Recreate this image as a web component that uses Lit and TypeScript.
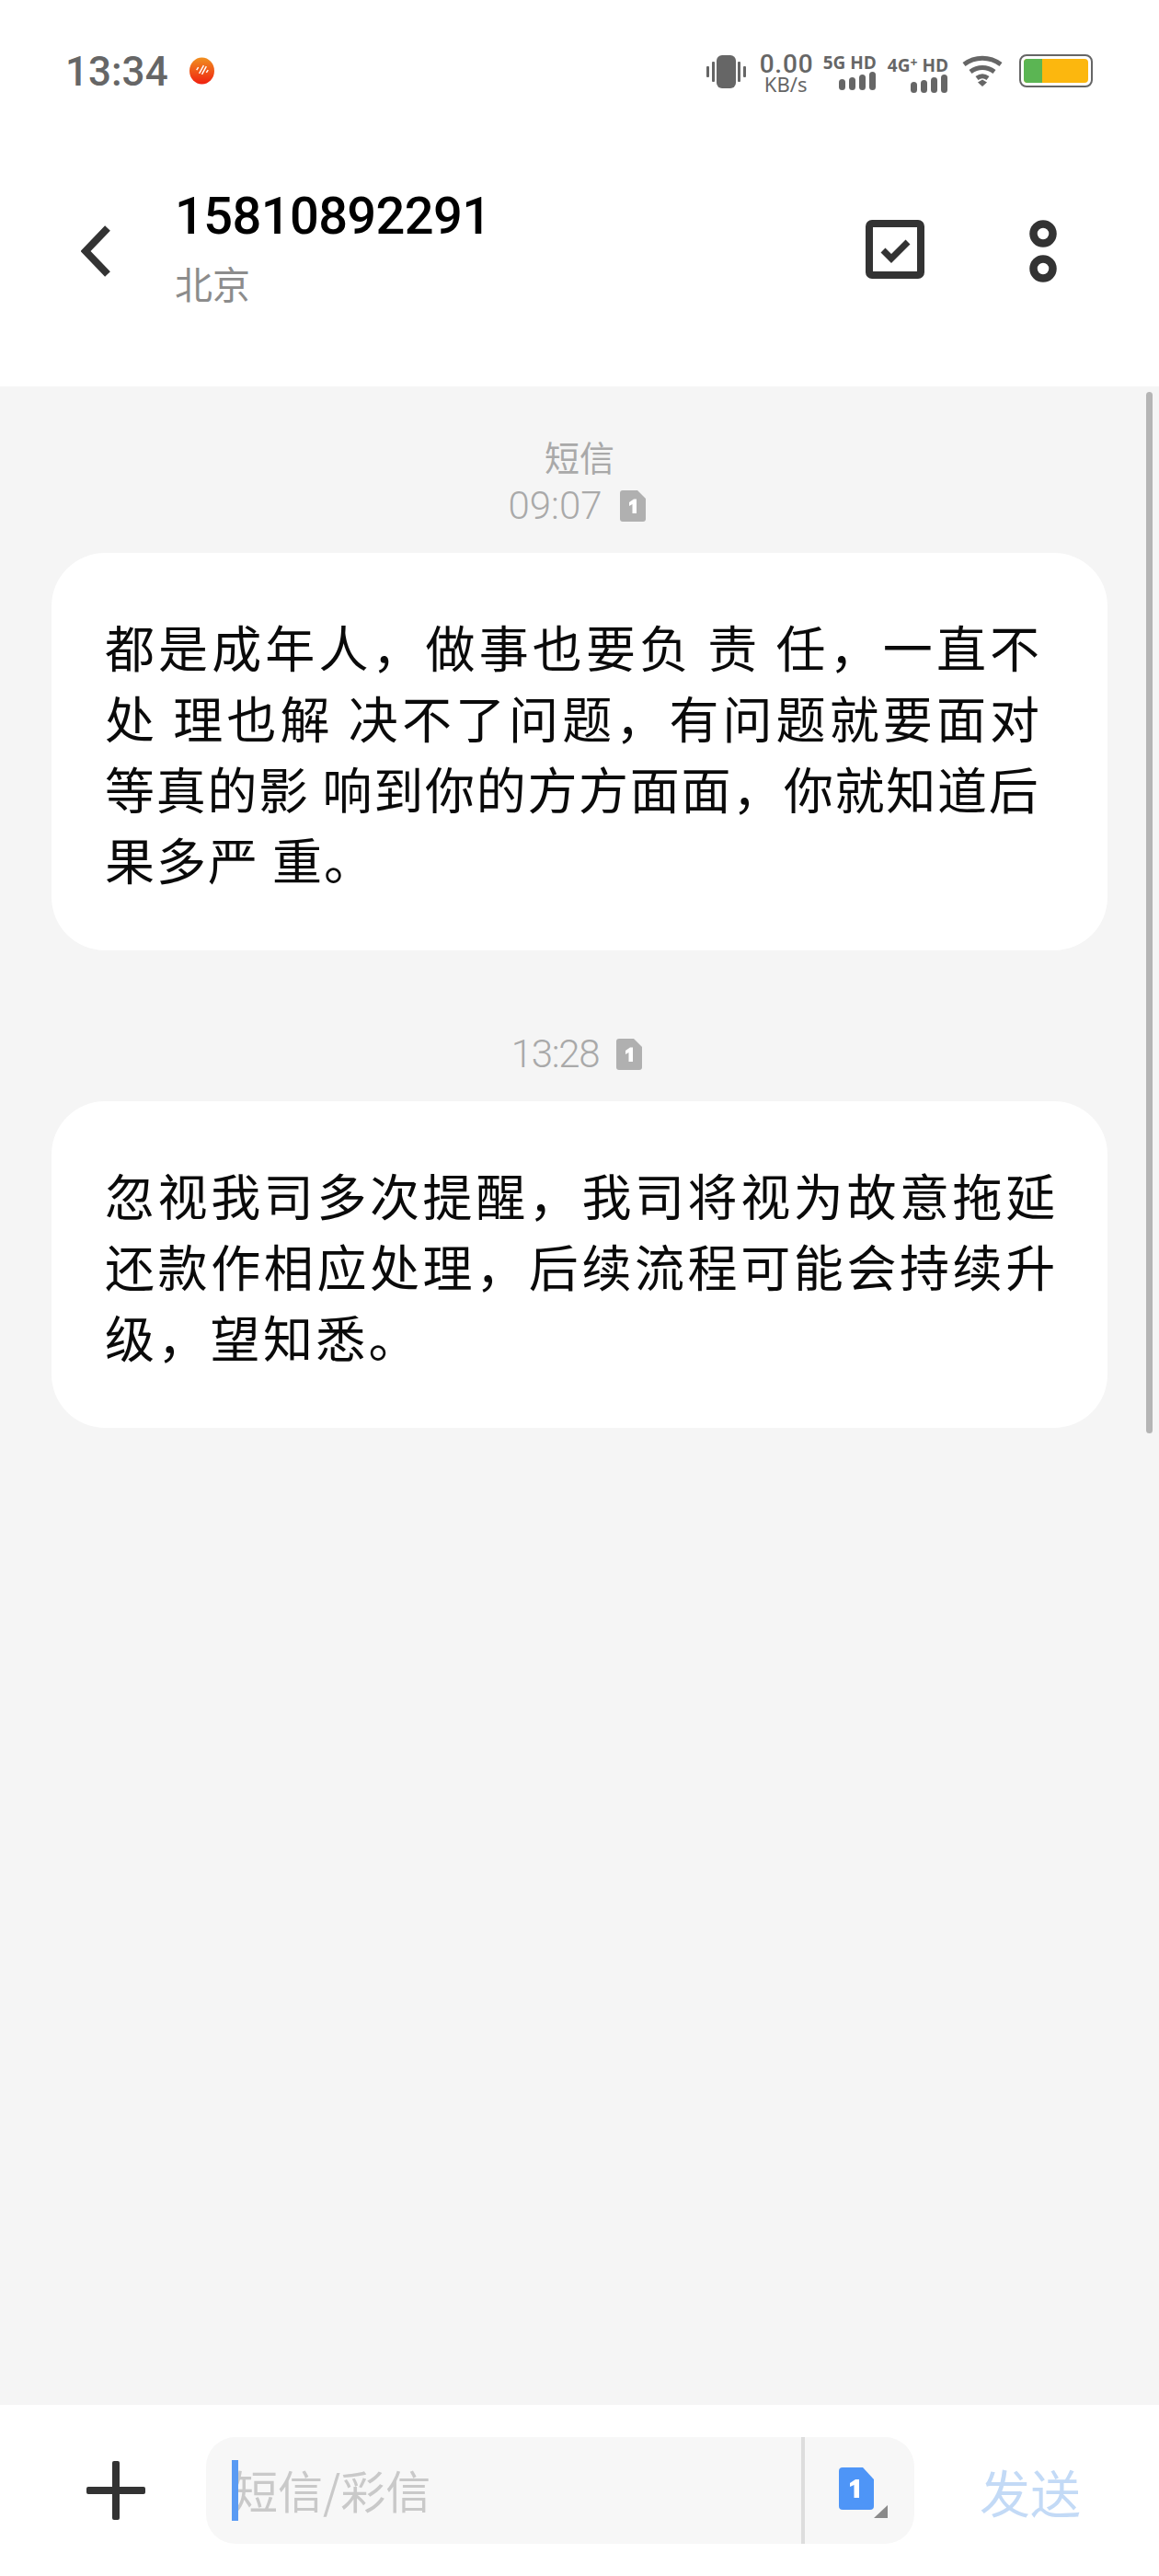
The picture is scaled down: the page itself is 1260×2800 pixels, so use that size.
import { LitElement, html, css, svg } from "lit";
import { customElement } from "lit/decorators.js";

// each line keeps its own tracking, the source text is unevenly spaced
const firstMsg = [
  { text: "都是成年人，做事也要负 责 任，一直不", track: 4.1 },
  { text: "处 理也解 决不了问题，有问题就要面对", track: 4.1 },
  { text: "等真的影 响到你的方方面面，你就知道后", track: 1.7 },
  { text: "果多严 重。", track: 2 },
];

const secondMsg = [
  { text: "忽视我司多次提醒，我司将视为故意拖延", track: 3.6 },
  { text: "还款作相应处理，后续流程可能会持续升", track: 3.6 },
  { text: "级，望知悉。", track: 3.3 },
];

const simIcon = (fill: string) => html`
  <svg class="sim" viewBox="0 0 28 34" width="28" height="34">
    <path d="M3 0H19L28 9V31a3 3 0 0 1-3 3H3a3 3 0 0 1-3-3V3a3 3 0 0 1 3-3Z" fill=${fill}></path>
    <path d="M10 13l5-3.500h3V25H13.500V15L10 17Z" fill="#fff"></path>
  </svg>
`;

const signalBars = svg`
  <rect x="0" y="8" width="7" height="12" rx="3.500"></rect>
  <rect x="11" y="6" width="7" height="14" rx="3.500"></rect>
  <rect x="22" y="3" width="7" height="17" rx="3.500"></rect>
  <rect x="33" y="0" width="7" height="20" rx="3.500"></rect>
`;

@customElement("app-root")
export class AppRoot extends LitElement {
  static styles = css`
    :host {
      display: block;
      width: 1260px;
      height: 2800px;
      font-family: Roboto, "Noto Sans CJK SC", sans-serif;
      background: #fff;
      overflow: hidden;
    }

    .page {
      display: flex;
      flex-direction: column;
      height: 2800px;
    }

    /* status bar */
    .status {
      height: 154px;
      display: flex;
      align-items: flex-start;
      padding: 52px 72px 0 71px;
      box-sizing: border-box;
      color: #666;
    }

    .time {
      font-size: 44px;
      font-weight: 500;
      line-height: 52px;
      margin-right: 23px;
    }

    .dot {
      margin-top: 10px;
    }

    .status-icons {
      margin-left: auto;
      display: flex;
      align-items: flex-start;
      margin-top: 7px;
    }

    .vibrate {
      margin: 1px 15px 0 0;
    }

    .speed {
      width: 57px;
      margin-right: 12px;
      text-align: center;
      line-height: 1;
    }

    .speed b {
      display: block;
      font-weight: 500;
      font-size: 28px;
      letter-spacing: 0.8px;
      line-height: 22px;
    }

    .speed span {
      display: block;
      font-size: 22px;
      line-height: 18px;
      margin-top: 1px;
      font-family: "Noto Sans", sans-serif;
    }

    .net {
      display: flex;
      flex-direction: column;
      align-items: flex-end;
      margin-right: 12px;
    }

    .net span {
      font-family: "Open Sans", sans-serif;
      font-size: 19px;
      font-weight: 700;
      line-height: 18px;
      white-space: nowrap;
    }

    .net em {
      font-style: normal;
      font-size: 14px;
      vertical-align: 5px;
    }

    .net svg {
      margin: 1px 1px 0 0;
      fill: #666;
    }

    .wifi {
      margin: 1px 18px 0 3px;
    }

    /* header */
    .head {
      height: 266px;
      box-sizing: border-box;
      display: flex;
      align-items: flex-start;
    }

    .back {
      margin: 91px 0 0 88px;
    }

    .who {
      margin: 49px 0 0 70px;
    }

    .num {
      font-size: 56px;
      font-weight: 500;
      letter-spacing: -0.6px;
      line-height: 64px;
      color: #000;
    }

    .place {
      font-family: "Noto Sans CJK SC", sans-serif;
      font-size: 41px;
      line-height: 58px;
      color: #8c8c8c;
      margin-top: 11px;
    }

    .tools {
      margin-left: auto;
      display: flex;
      align-items: flex-start;
      padding: 85px 111px 0 0;
      gap: 114px;
    }

    /* messages */
    .list {
      flex: 1;
      background: #f5f5f5;
      padding: 0 56px;
      position: relative;
    }

    .thumb {
      position: absolute;
      top: 6px;
      right: 7px;
      width: 7px;
      height: 1132px;
      border-radius: 4px;
      background: #b5b5b5;
    }

    .stamp {
      display: flex;
      flex-direction: column;
      align-items: center;
      color: #a9a9a9;
    }

    .stamp .label {
      font-family: "Noto Sans CJK SC", sans-serif;
      font-size: 38px;
      line-height: 50px;
    }

    .stamp .when {
      display: flex;
      align-items: center;
      gap: 19px;
      padding-right: 6px;
      font-size: 42px;
      font-weight: 300;
      line-height: 50px;
    }

    .sim {
      display: block;
    }

    .stamp-a {
      padding-top: 51px;
      gap: 4px;
    }

    .stamp-b {
      padding-top: 88px;
    }

    .stamp-b .when {
      letter-spacing: -1.300px;
    }

    .bubble {
      background: #fff;
      border-radius: 58px;
      padding: 63px 58px 61px;
      margin-top: 26px;
      font-family: "Noto Sans CJK SC", sans-serif;
      font-size: 54px;
      line-height: 77px;
      color: #0a0a0a;
      white-space: nowrap;
    }

    .bubble div {
      height: 77px;
    }

    /* composer */
    .foot {
      height: 186px;
      display: flex;
      align-items: flex-start;
      padding: 35px 0 0 94px;
      box-sizing: border-box;
    }

    .plus {
      margin: 26px 66px 0 0;
    }

    .field {
      width: 770px;
      height: 116px;
      border-radius: 32px;
      background: #f7f7f7;
      display: flex;
      position: relative;
    }

    .caret {
      position: absolute;
      left: 28px;
      top: 25px;
      width: 7px;
      height: 66px;
      background: #5a9bf3;
    }

    .hint {
      flex: 1;
      padding-left: 29px;
      font-family: "Noto Sans CJK SC", sans-serif;
      font-size: 49px;
      line-height: 114px;
      color: #c9c9c9;
    }

    .sim-pick {
      width: 123px;
      border-left: 4px solid #dddddd;
      box-sizing: border-box;
      position: relative;
    }

    .sim-pick svg.card {
      position: absolute;
      left: 37px;
      top: 33px;
    }

    .sim-pick i {
      position: absolute;
      left: 75px;
      top: 74px;
      width: 15px;
      height: 14px;
      background: #8a8a8a;
      clip-path: polygon(100% 0, 100% 100%, 0 100%);
    }

    .send {
      margin-left: 71px;
      font-family: "Noto Sans CJK SC", sans-serif;
      font-size: 55px;
      line-height: 116px;
      color: #c3daf6;
    }
  `;

  private lines(msg: { text: string; track: number }[]) {
    return msg.map((l) => html`<div style="letter-spacing:${l.track}px">${l.text}</div>`);
  }

  render() {
    return html`
      <div class="page">
        <div class="status">
          <div class="time">13:34</div>
          <svg class="dot" viewBox="0 0 28 30" width="27" height="30">
            <defs>
              <linearGradient id="logo" x1="0" y1="0" x2="0" y2="1">
                <stop offset="0" stop-color="#f09020"></stop>
                <stop offset="1" stop-color="#f02010"></stop>
              </linearGradient>
            </defs>
            <ellipse cx="14" cy="15" rx="14" ry="15" fill="url(#logo)"></ellipse>
            <path d="M8 14l2-3M11 18l5-9M14 19l5-9M19 17l2-3" stroke="#fff" stroke-width="1.500" fill="none"></path>
          </svg>
          <div class="status-icons">
            <svg class="vibrate" viewBox="0 0 43 36" width="43" height="36" fill="#666">
              <rect x="11" y="0" width="21" height="36" rx="6"></rect>
              <rect x="0" y="12" width="3" height="12" rx="1"></rect>
              <rect x="6" y="7" width="3" height="22" rx="1"></rect>
              <rect x="34" y="7" width="3" height="22" rx="1"></rect>
              <rect x="40" y="12" width="3" height="12" rx="1"></rect>
            </svg>
            <div class="speed"><b>0.00</b><span>KB/s</span></div>
            <div class="net">
              <span>5G HD</span>
              <svg viewBox="0 0 40 20" width="40" height="20">${signalBars}</svg>
            </div>
            <div class="net">
              <span>4G<em>+</em> HD</span>
              <svg viewBox="0 0 40 20" width="40" height="20">${signalBars}</svg>
            </div>
            <svg class="wifi" viewBox="0 0 44 34" width="44" height="34" fill="none" stroke="#666" stroke-width="5">
              <path d="M2 10C14 1 30 1 42 10"></path>
              <path d="M9 18C17 12 27 12 35 18"></path>
              <path d="M16 25C20 22 24 22 28 25"></path>
              <path d="M17 29.500L22 26.500L27 29.500L22 34Z" fill="#666" stroke="none"></path>
            </svg>
            <svg viewBox="0 0 80 36" width="80" height="36">
              <rect x="1" y="1" width="78" height="34" rx="7" fill="#fff" stroke="#666" stroke-width="2"></rect>
              <rect x="5" y="5" width="70" height="26" rx="4" fill="#fcb70e"></rect>
              <path d="M25 5H9a4 4 0 0 0-4 4V27a4 4 0 0 0 4 4H25Z" fill="#5bb553"></path>
            </svg>
          </div>
        </div>

        <div class="head">
          <svg class="back" viewBox="0 0 32 56" width="32" height="56" fill="none" stroke="#333" stroke-width="8" stroke-linejoin="miter">
            <path d="M29 3L5 28L29 53"></path>
          </svg>
          <div class="who">
            <div class="num">15810892291</div>
            <div class="place">北京</div>
          </div>
          <div class="tools">
            <svg viewBox="0 0 64 64" width="64" height="64" fill="none" stroke="#333">
              <rect x="4" y="4" width="56" height="56" rx="3" stroke-width="8"></rect>
              <path d="M19 33L28 42L46 24" stroke-width="7"></path>
            </svg>
            <svg viewBox="0 0 30 68" width="30" height="68" fill="none" stroke="#333" stroke-width="8.500">
              <circle cx="15" cy="15" r="10.500"></circle>
              <circle cx="15" cy="53" r="10.500"></circle>
            </svg>
          </div>
        </div>

        <div class="list">
          <div class="thumb"></div>
          <div class="stamp stamp-a">
            <div class="label">短信</div>
            <div class="when">09:07 ${simIcon("#b0b0b0")}</div>
          </div>
          <div class="bubble">${this.lines(firstMsg)}</div>
          <div class="stamp stamp-b">
            <div class="when">13:28 ${simIcon("#b0b0b0")}</div>
          </div>
          <div class="bubble">${this.lines(secondMsg)}</div>
        </div>

        <div class="foot">
          <svg class="plus" viewBox="0 0 64 64" width="64" height="64" fill="#333">
            <rect x="28" y="0" width="8" height="64" rx="2"></rect>
            <rect x="0" y="28" width="64" height="8" rx="2"></rect>
          </svg>
          <div class="field">
            <div class="hint">短信/彩信</div>
            <div class="caret"></div>
            <div class="sim-pick">
              <svg class="card" viewBox="0 0 38 46" width="38" height="46">
                <path d="M4 0H26L38 13V42a4 4 0 0 1-4 4H4a4 4 0 0 1-4-4V4a4 4 0 0 1 4-4Z" fill="#4e95f7"></path>
                <path d="M12 17l6-4h4V33H16.500V19L12 21Z" fill="#fff"></path>
              </svg>
              <i></i>
            </div>
          </div>
          <div class="send">发送</div>
        </div>
      </div>
    `;
  }
}
